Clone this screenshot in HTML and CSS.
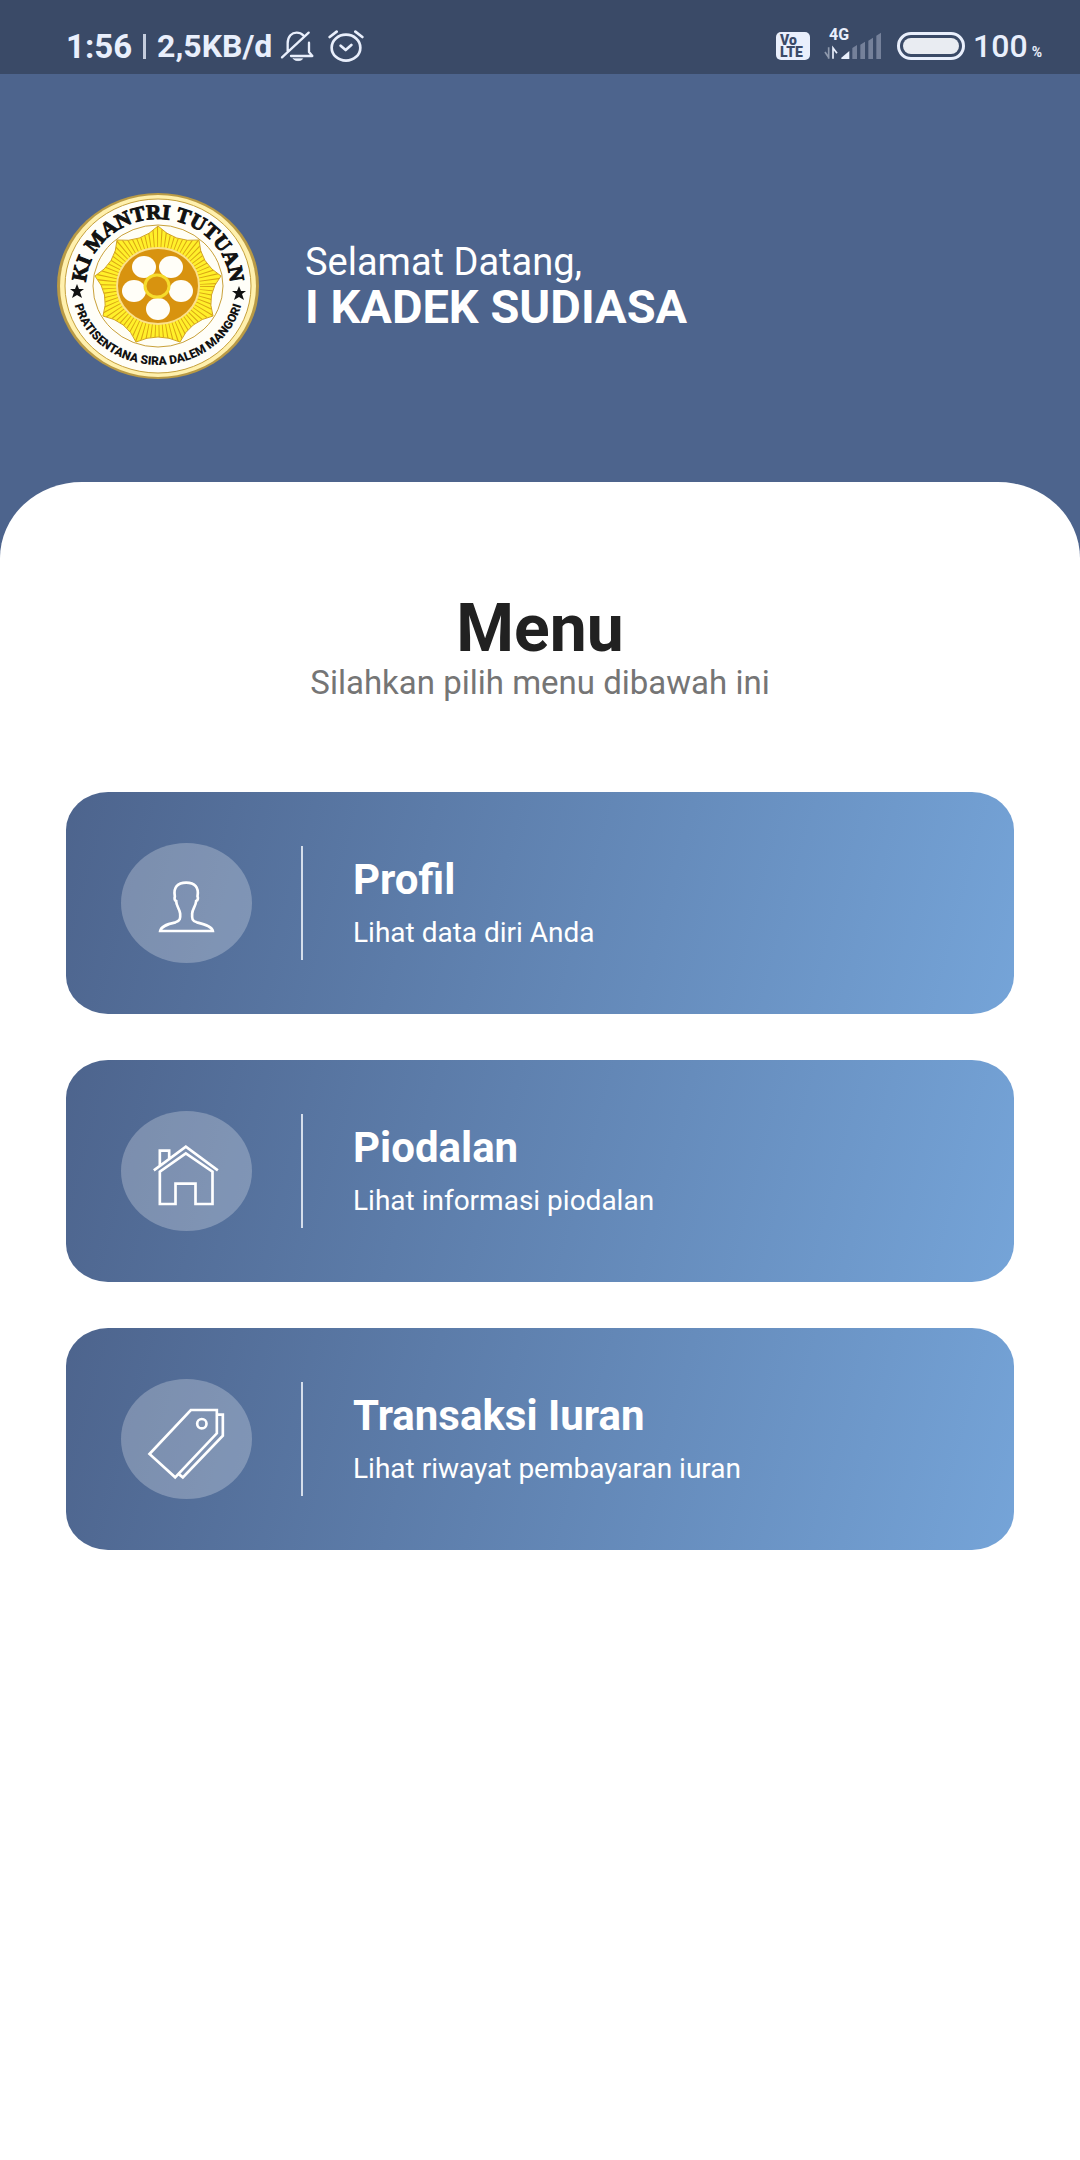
FILE: index.html
```html
<!DOCTYPE html>
<html lang="id">
  <head>
    <meta charset="utf-8">
    <meta name="viewport" content="width=device-width, initial-scale=1">
    <title>Menu</title>
    <link rel="stylesheet" href="styles.css">
  </head>
  <body>
    <div class="statusbar">
      <div class="status-left">
        <span class="clock">1:56</span>
        <span class="pipe"></span>
        <span class="speed">2,5KB/d</span>
        <svg class="bell" width="34" height="32" viewBox="0 0 102 96" fill="none" stroke="#e9effc" stroke-width="7" stroke-linecap="round" stroke-linejoin="round">
          <path d="M23 66V40C23 18 36 8 50 8c8 0 15 3 20 8M33 78h64L87 66V38M6 82L86 8"/>
          <path d="M40 86h28c-4 8-24 8-28 0z" fill="#e9effc" stroke-width="2"/>
        </svg>
        <svg class="alarm" width="36" height="34" viewBox="0 0 108 102" fill="none" stroke="#e9effc" stroke-width="8" stroke-linecap="round" stroke-linejoin="round">
          <ellipse cx="54" cy="56" rx="43" ry="39"/>
          <path d="M5 24L26 8M82 8l21 16M38 50l15 13 17-15"/>
        </svg>
      </div>
      <div class="status-right">
        <div class="volte"><span>Vo</span><span>LTE</span></div>
        <div class="signal">
          <span class="network">4G</span>
          <svg width="58" height="28" viewBox="0 0 174 84">
            <path d="M3 60l12 18M14 46v34" stroke="#8e99ad" stroke-width="5" fill="none"/>
            <path d="M27 80V48l12 16" stroke="#e9effc" stroke-width="5" fill="none"/>
            <path d="M52 81V77l24-20v24z" fill="#e9effc"/>
            <path d="M85 48l14-9v42H85zM109 38l14-9v52h-14zM133 26l14-9v64h-14zM157 11l14-9v79h-14z" fill="#75819a"/>
          </svg>
        </div>
        <div class="battery"><div class="battery-level"></div></div>
        <div class="percent">100<small>%</small></div>
      </div>
    </div>

    <header class="header">
      <svg class="logo" width="204" height="188" viewBox="0 0 204 188">
        <defs>
          <path id="arcTop" d="M30 94A72 67 0 0 1 174 94"/>
          <path id="arcBottom" d="M16 94A86 79 0 0 0 188 94"/>
          <path id="star" d="M102 34Q119 51 143 48Q144 71 165 84Q150 102 157 124Q134 129 124 150Q102 140 80 150Q71 129 47 124Q54 102 39 84Q60 71 61 48Q85 51 102 34z"/>
          <clipPath id="starClip"><use href="#star"/></clipPath>
        </defs>
        <ellipse cx="102" cy="94" rx="101" ry="93" fill="#b99a45"/>
        <ellipse cx="102" cy="94" rx="98" ry="91" fill="#fff0ad"/>
        <ellipse cx="102" cy="94" rx="93" ry="87" fill="#fffef8" stroke="#c5a03c" stroke-width="1"/>
        <ellipse cx="102" cy="94" rx="65" ry="61" fill="#fffef5" stroke="#c9a13b" stroke-width="1"/>
        <use href="#star" fill="#fff02a"/>
        <g clip-path="url(#starClip)">
          <ellipse cx="102" cy="94" rx="51" ry="48" fill="none" stroke="#d9a514" stroke-width="24" stroke-dasharray="1 3"/>
        </g>
        <use href="#star" fill="none" stroke="#d3a520"/>
        <ellipse cx="102" cy="94" rx="41" ry="38" fill="#d8930f" stroke="#fbe08a" stroke-width="2"/>
        <g fill="#fffef8">
          <ellipse cx="88" cy="75" rx="12" ry="11"/>
          <ellipse cx="115" cy="75" rx="12" ry="11"/>
          <ellipse cx="78" cy="99" rx="12" ry="11"/>
          <ellipse cx="125" cy="99" rx="12" ry="11"/>
          <ellipse cx="102" cy="117" rx="12" ry="11"/>
        </g>
        <ellipse cx="101" cy="94" rx="12" ry="11" fill="#d8930f" stroke="#f6dc2c" stroke-width="3"/>
        <path id="mark" d="M21 92l2 5h5l-4 3 2 6-5-3-5 3 2-6-4-3h5z" fill="#111"/>
        <use href="#mark" x="162" y="2"/>
        <text class="logo-top" text-anchor="middle"><textPath href="#arcTop" startOffset="50%">KI MANTRI TUTUAN</textPath></text>
        <text class="logo-bottom" text-anchor="middle"><textPath href="#arcBottom" startOffset="50%">PRATISENTANA SIRA DALEM MANGORI</textPath></text>
      </svg>
      <div class="welcome">
        <div class="greeting">Selamat Datang,</div>
        <div class="username">I KADEK SUDIASA</div>
      </div>
    </header>

    <main class="sheet">
      <h1 class="title">Menu</h1>
      <p class="subtitle">Silahkan pilih menu dibawah ini</p>

      <nav class="menu">
        <a class="card" href="#profil">
          <span class="icon">
            <svg viewBox="33 38 392 360">
              <path d="M150 302c2-12 14-19 46-26 14-4 15-12 14-26-1-14-12-22-12-38-6-2-5-10-4-14-5-27 8-41 34-41s39 14 34 41c2 5 2 12-4 14-1 16-12 24-12 38-1 16 0 22 14 26 32 7 46 14 48 26z"/>
            </svg>
          </span>
          <span class="text">
            <span class="name">Profil</span>
            <span class="desc">Lihat data diri Anda</span>
          </span>
        </a>
        <a class="card" href="#piodalan">
          <span class="icon">
            <svg viewBox="33 32 392 360">
              <path d="M131 210l96-71 96 71M149 195v-44h28v22M149 214v97h47v-61h60v61h51v-97l-80-55z"/>
            </svg>
          </span>
          <span class="text">
            <span class="name">Piodalan</span>
            <span class="desc">Lihat informasi piodalan</span>
          </span>
        </a>
        <a class="card" href="#iuran">
          <span class="icon">
            <svg viewBox="33 38 392 360">
              <path d="M118 263l124-132h78v70L195 333zM322 145h16v63L218 333l-14-11"/>
              <circle cx="275" cy="172" r="14"/>
            </svg>
          </span>
          <span class="text">
            <span class="name">Transaksi Iuran</span>
            <span class="desc">Lihat riwayat pembayaran iuran</span>
          </span>
        </a>
      </nav>
    </main>
  </body>
</html>
```
FILE: styles.css
```css
* {
  box-sizing: border-box;
}
html, body {
  min-height: 100%;
  margin: 0;
}
body {
  display: flex;
  flex-direction: column;
  min-height: 100vh;
  background: #4d648d;
  font-family: Roboto, "Liberation Sans", sans-serif;
}

/* status bar */
.statusbar {
  display: flex;
  justify-content: space-between;
  height: 74px;
  padding: 18px 38px 0 66px;
  background: #3a4a67;
  color: #e9effc;
}
.status-left, .status-right {
  display: flex;
  align-items: center;
  height: 56px;
}
.clock, .speed {
  font-weight: bold;
}
.clock {
  font-size: 33px;
}
.speed {
  font-size: 32px;
}
.pipe {
  width: 3px;
  height: 25px;
  margin: 0 11px;
  background: #c5cddd;
}
.bell {
  margin-left: 8px;
}
.alarm {
  margin-left: 14px;
}
.volte {
  display: flex;
  flex-direction: column;
  width: 34px;
  height: 28px;
  padding: 2px 4px;
  border-radius: 5px;
  background: #e9effc;
  color: #3a4a67;
  font-size: 14px;
  font-weight: 900;
  line-height: 12px;
}
.signal {
  position: relative;
  display: flex;
  margin-left: 14px;
}
.network {
  position: absolute;
  left: 5px;
  top: -5px;
  font-size: 16px;
  font-weight: bold;
  line-height: 16px;
}
.battery {
  width: 68px;
  height: 28px;
  margin-left: 15px;
  padding: 3px;
  border: 3px solid #e9effc;
  border-radius: 14px;
}
.battery-level {
  height: 100%;
  border-radius: 8px;
  background: #e9ecf2;
}
.percent {
  margin-left: 8px;
  font-size: 32px;
  font-weight: 500;
}
.percent small {
  margin-left: 4px;
  font-size: 14px;
  font-weight: bold;
}

/* header */
.header {
  display: flex;
  align-items: center;
  height: 408px;
  padding: 16px 56px 0;
}
.logo {
  flex-shrink: 0;
}
.logo-top {
  fill: #111;
  stroke: #111;
  font-family: "Liberation Serif", serif;
  font-size: 21px;
  font-weight: bold;
}
.logo-bottom {
  fill: #111;
  font-size: 12px;
  font-weight: 900;
}
.welcome {
  margin-left: 45px;
  color: #fff;
}
.greeting {
  font-size: 38px;
  line-height: 42px;
}
.username {
  font-size: 47px;
  font-weight: bold;
  line-height: 48px;
}

/* white sheet */
.sheet {
  flex: 1;
  padding: 112px 66px 48px;
  border-radius: 82px 82px 0 0 / 76px 76px 0 0;
  background: #fff;
  text-align: center;
}
.title {
  margin: 0;
  color: #212121;
  font-size: 66px;
  line-height: 70px;
}
.subtitle {
  margin: 0;
  color: #757575;
  font-size: 33px;
  line-height: 38px;
}

/* menu cards */
.menu {
  display: flex;
  flex-direction: column;
  gap: 46px;
  margin-top: 90px;
}
.card {
  display: flex;
  align-items: center;
  height: 222px;
  padding: 0 55px;
  border-radius: 42px / 38px;
  background: linear-gradient(105deg, #4d648d, #75a4d8);
  color: #fff;
  text-align: left;
  text-decoration: none;
}
.icon {
  flex-shrink: 0;
  width: 131px;
  height: 120px;
  border-radius: 50%;
  background: rgba(255, 255, 255, 0.25);
}
.icon svg {
  display: block;
  width: 100%;
  height: 100%;
  fill: none;
  stroke: #fff;
  stroke-width: 8;
}
.text {
  display: flex;
  flex-direction: column;
  justify-content: center;
  height: 114px;
  margin-left: 49px;
  padding-left: 50px;
  border-left: 2px solid #d5deeb;
}
.name {
  font-size: 42px;
  font-weight: bold;
  line-height: 50px;
}
.desc {
  margin-top: 10px;
  font-size: 28px;
  line-height: 36px;
}
```
